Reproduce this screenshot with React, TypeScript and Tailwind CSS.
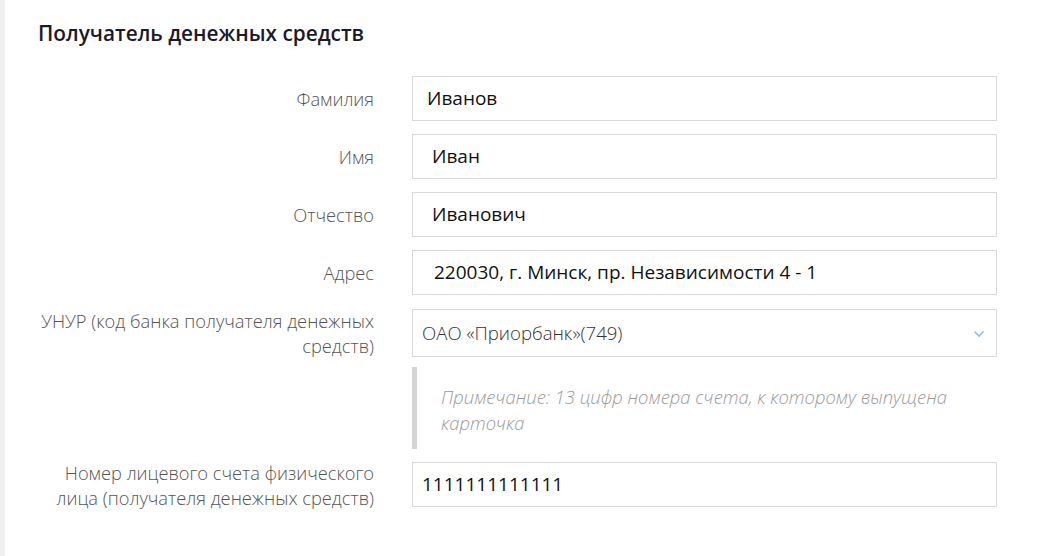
const label = "font-['Open_Sans',sans-serif] text-[18.3px] font-light leading-[25px] text-[#555] text-right";
const box = "flex-1 h-[45px] border border-[#d9d9d9] bg-white flex items-center font-['Open_Sans',sans-serif] text-[19px] text-[#111]";

type Field = { label: string; value: string; pad: string };

const fields: Field[] = [
  { label: "Фамилия", value: "Иванов", pad: "pl-[14px]" },
  { label: "Имя", value: "Иван", pad: "pl-[19px]" },
  { label: "Отчество", value: "Иванович", pad: "pl-[19px]" },
  { label: "Адрес", value: "220030, г. Минск, пр. Независимости 4 - 1", pad: "pl-[21px]" },
];

function Row({ title, children, h = "h-[45px]" }: { title: React.ReactNode; children: React.ReactNode; h?: string }) {
  return (
    <div className={`flex items-center gap-[38px] ${h}`}>
      <div className={`w-[336px] shrink-0 ${label}`}>{title}</div>
      {children}
    </div>
  );
}

export default function App() {
  return (
    <div className="min-h-[556px] w-[1058px] bg-white flex">
      <div className="w-[5px] shrink-0 bg-[#f0f0f0]" />
      <div className="flex-1 pl-[33px] pr-[61px] pt-[18px]">
        <h2 className="font-['Open_Sans',sans-serif] text-[20.8px] font-semibold leading-[30px] text-[#1b1a26]">
          Получатель денежных средств
        </h2>
        <div className="mt-[28px] flex flex-col">
          {fields.map((f, i) => (
            <div key={f.label} className={i === 0 ? "" : "mt-[13px]"}>
              <Row title={f.label}>
                <div className={`${box} ${f.pad}`}>{f.value}</div>
              </Row>
            </div>
          ))}
          <div className="mt-[14px]">
            <Row
              h="h-[48px]"
              title={
                <>
                  УНУР (код банка получателя денежных
                  <br />
                  средств)
                </>
              }
            >
              <div className="flex-1 h-[48px] border border-[#d9d9d9] bg-white flex items-center justify-between pl-[9px] pr-[11px] font-['Open_Sans',sans-serif] text-[18.6px] font-light text-[#333]">
                <span>ОАО «Приорбанк»(749)</span>
                <svg width="12" height="8" viewBox="0 0 12 8" fill="none" className="mt-[2px]">
                  <polyline points="1.5,1.5 6,6 10.5,1.5" stroke="#8fc0e8" strokeWidth="1.7" />
                </svg>
              </div>
            </Row>
          </div>
          <div className="mt-[10px] flex gap-[38px]">
            <div className="w-[336px] shrink-0" />
            <div className="flex-1 h-[82px] border-l-[5px] border-[#d4d4d4] pl-[24px] pt-[17px] font-['Open_Sans',sans-serif] text-[18.4px] font-light italic leading-[26px] text-[#9a9a9a]">
              Примечание: 13 цифр номера счета, к которому выпущена
              <br />
              карточка
            </div>
          </div>
          <div className="mt-[13px]">
            <Row
              title={
                <>
                  Номер лицевого счета физического
                  <br />
                  лица (получателя денежных средств)
                </>
              }
            >
              <div className={`${box} pl-[9px]`}>1111111111111</div>
            </Row>
          </div>
        </div>
      </div>
    </div>
  );
}
